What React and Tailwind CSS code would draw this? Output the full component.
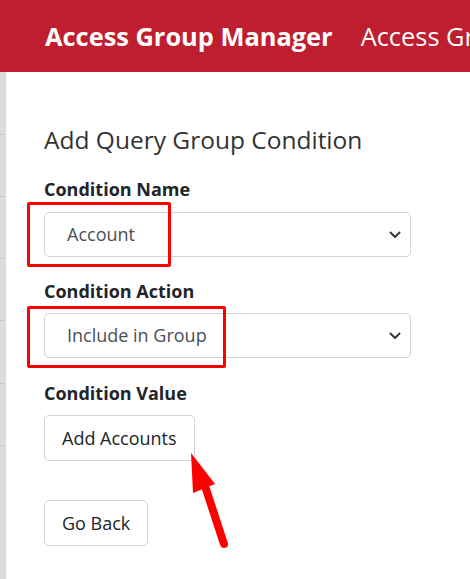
import React from "react";

const font = { fontFamily: '"Open Sans", "Noto Sans", Arial, sans-serif' };

function Chevron() {
  return (
    <svg width="12" height="8" viewBox="0 0 12 8" className="absolute right-[9px] top-1/2 -translate-y-1/2">
      <path d="M1.5 1.5 L6 6 L10.5 1.5" fill="none" stroke="#343a40" strokeWidth="2" strokeLinecap="round" strokeLinejoin="round" />
    </svg>
  );
}

function FakeSelect({ value, box }) {
  return (
    <div className="relative">
      <div className="relative h-[45px] w-[367px] rounded-[5px] border border-[#ced4da] bg-white pl-[22px] flex items-center text-[18px] text-[#495057]">
        {value}
        <Chevron />
      </div>
      {/* red highlight from the screenshot */}
      <div className={`absolute -left-[17px] rounded-[2px] border-[3px] border-[#ff0000] ${box}`} />
    </div>
  );
}

export default function App() {
  return (
    <div className="relative w-[470px] h-[579px] overflow-hidden bg-white" style={font}>
      <header className="h-[72px] bg-[#be1e2d] flex items-center pl-[45px] text-white whitespace-nowrap">
        <span className="text-[25.4px] font-bold">Access Group Manager</span>
        <span className="mx-[14px] h-[30px] w-px bg-white/40" />
        <span className="text-[25.4px]">Access Group</span>
      </header>

      <div className="flex h-[507px]">
        {/* sidebar edge */}
        <div className="w-[6px] bg-[#dcdcdc] flex flex-col">
          <div className="h-[63px] border-b border-[#c8c8c8]" />
          <div className="h-[62px] border-b border-[#c8c8c8]" />
          <div className="h-[62px] border-b border-[#c8c8c8]" />
          <div className="h-[62px] border-b border-[#c8c8c8]" />
          <div className="h-[63px] border-b border-[#c8c8c8]" />
          <div className="h-[62px] border-b border-[#c8c8c8]" />
        </div>

        <main className="pl-[38px] pt-[50px] text-[#212529]">
          <h2 className="text-[24.5px] leading-[36px] text-[#333]">Add Query Group Condition</h2>

          <label className="block mt-[18px] text-[18px] font-bold leading-[27px]">Condition Name</label>
          <div className="mt-[9px]">
            <FakeSelect value="Account" box="-top-[10px] h-[65px] w-[144px]" />
          </div>

          <label className="block mt-[21px] text-[18px] font-bold leading-[27px]">Condition Action</label>
          <div className="mt-[8px]">
            <FakeSelect value="Include in Group" box="-top-[7px] h-[62px] w-[199px]" />
          </div>

          <label className="block mt-[22px] text-[18px] font-bold leading-[27px]">Condition Value</label>
          <button className="mt-[8px] h-[46px] px-[17px] rounded-[5px] border border-[#ced4da] bg-white text-[18px] text-[#212529]">
            Add Accounts
          </button>

          <div className="mt-[39px]">
            <button className="h-[46px] px-[17px] rounded-[5px] border border-[#ced4da] bg-white text-[18px] text-[#212529]">
              Go Back
            </button>
          </div>
        </main>
      </div>

      {/* red annotation arrow */}
      <svg className="absolute left-0 top-0 pointer-events-none" width="470" height="579">
        <line x1="224" y1="544" x2="205" y2="486" stroke="#ff0000" strokeWidth="8" strokeLinecap="round" />
        <polygon points="191,453 215,484 193,493" fill="#ff0000" />
      </svg>
    </div>
  );
}
